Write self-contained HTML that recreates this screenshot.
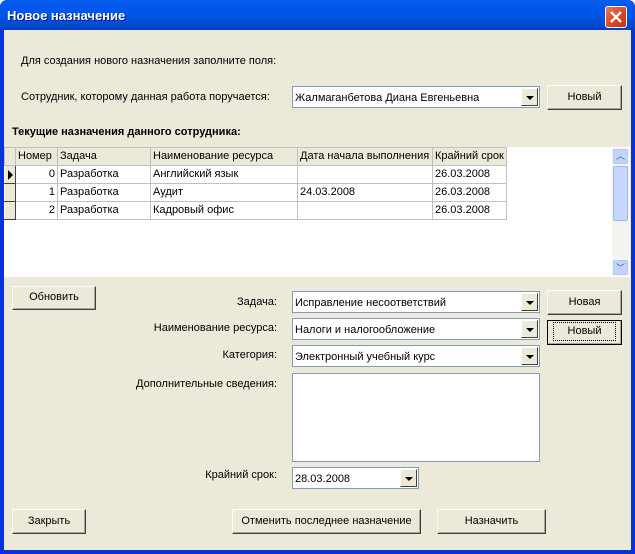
<!DOCTYPE html>
<html><head><meta charset="utf-8"><style>
*{margin:0;padding:0;box-sizing:border-box}
body{width:635px;height:554px;overflow:hidden;background:#fff;font-family:"Liberation Sans",sans-serif;font-size:11px;color:#000;position:relative}
.a{position:absolute}
.win{left:0;top:0;width:635px;height:554px;background:#0831d9;border-radius:7px 7px 0 0}
.title{left:0;top:0;width:635px;height:30px;border-radius:7px 7px 0 0;background:linear-gradient(#0a5fe8,#0058ee 20%,#0054e3 60%,#0047c9 90%,#003dc0)}
.body{left:4px;top:30px;width:627px;height:520px;background:#ece9d8}
.lbl{white-space:nowrap}
.r{text-align:right}
.combo{background:#fff;border:1px solid #7f9db9;height:22px;padding:5px 2px 0;white-space:nowrap;overflow:hidden}
.dd{position:absolute;right:1px;top:1px;width:17px;height:18px;background:#ece9d8;border:1px solid;border-color:#fff #404040 #404040 #fff}
.dd:after{content:"";position:absolute;left:4px;top:7px;border-left:4px solid transparent;border-right:4px solid transparent;border-top:4px solid #000}
.btn{background:#ece9d8;border:1px solid;border-color:#fff #404040 #404040 #fff;box-shadow:inset -1px -1px 0 #aca899;text-align:center;line-height:22px}
table{border-collapse:collapse}
td{border:1px solid #c0c0c0;height:18px;padding:0 2px;white-space:nowrap;line-height:15px}
</style></head><body>
<div class="a win"></div>
<div class="a title"></div>
<div class="a lbl" style="left:7px;top:8px;color:#fff;font-weight:bold;font-size:13px;text-shadow:1px 1px #0a1e7a">Новое назначение</div>
<div class="a" style="left:605px;top:6px;width:22px;height:22px;border:1px solid #fff;border-radius:3px;background:linear-gradient(135deg,#e67a5a,#d8431f 60%,#c23a1a)"><svg width="20" height="20" style="position:absolute;left:0;top:0"><path d="M5 5L15 15M15 5L5 15" stroke="#fff" stroke-width="2.4"/></svg></div>
<div class="a body"></div>

<div class="a lbl" style="left:21px;top:55px">Для создания нового назначения заполните поля:</div>
<div class="a lbl" style="left:21px;top:91px">Сотрудник, которому данная работа поручается:</div>
<div class="a combo" style="left:292px;top:86px;width:248px">Жалмаганбетова Диана Евгеньевна<div class="dd"></div></div>
<div class="a btn" style="left:547px;top:85px;width:75px;height:25px">Новый</div>
<div class="a lbl" style="left:12px;top:126px;font-weight:bold">Текущие назначения данного сотрудника:</div>

<div class="a" style="left:4px;top:147px;width:626px;height:130px;background:#fff"></div>
<table class="a" style="left:4px;top:147px">
<tr style="background:#ece9d8"><td style="width:11px;padding:0;background:#ece9d8"></td><td style="width:42px">Номер</td><td style="width:93px">Задача</td><td style="width:147px">Наименование ресурса</td><td style="width:135px">Дата начала выполнения</td><td style="width:74px">Крайний срок</td></tr>
<tr><td style="padding:0;background:#ece9d8;border-color:#fff #404040 #404040 #fff"><svg width="10" height="14" style="display:block"><path d="M3 2L8 7L3 12Z" fill="#000"/></svg></td><td style="text-align:right">0</td><td>Разработка</td><td>Английский язык</td><td></td><td>26.03.2008</td></tr>
<tr><td style="padding:0;background:#ece9d8;border-color:#fff #404040 #404040 #fff"></td><td style="text-align:right">1</td><td>Разработка</td><td>Аудит</td><td>24.03.2008</td><td>26.03.2008</td></tr>
<tr><td style="padding:0;background:#ece9d8;border-color:#fff #404040 #404040 #fff"></td><td style="text-align:right">2</td><td>Разработка</td><td>Кадровый офис</td><td></td><td>26.03.2008</td></tr>
</table>
<div class="a" style="left:612px;top:148px;width:17px;height:128px;background:#f4f3ee"></div>
<div class="a" style="left:613px;top:149px;width:15px;height:15px;background:#c1d3fb;border:1px solid #b4c8f6;border-radius:2px;color:#4d6185;font-size:9px;text-align:center;line-height:12px">︿</div>
<div class="a" style="left:613px;top:166px;width:15px;height:55px;background:#c6d6fc;border:1px solid #9fb5ee;border-radius:2px"></div>
<div class="a" style="left:613px;top:260px;width:15px;height:15px;background:#c1d3fb;border:1px solid #b4c8f6;border-radius:2px;color:#4d6185;font-size:9px;text-align:center;line-height:14px">﹀</div>

<div class="a btn" style="left:12px;top:286px;width:84px;height:24px;line-height:20px">Обновить</div>
<div class="a lbl r" style="left:100px;width:177px;top:296px">Задача:</div>
<div class="a combo" style="left:292px;top:291px;width:248px">Исправление несоответствий<div class="dd"></div></div>
<div class="a btn" style="left:547px;top:290px;width:75px;height:25px">Новая</div>
<div class="a lbl r" style="left:100px;width:177px;top:322px">Наименование ресурса:</div>
<div class="a combo" style="left:292px;top:318px;width:248px">Налоги и налогообложение<div class="dd"></div></div>
<div class="a btn" style="left:547px;top:320px;width:75px;height:25px;border:1px solid #000;line-height:20px"><span style="border:1px dotted #000;display:inline-block;width:63px;line-height:17px">Новый</span></div>
<div class="a lbl r" style="left:100px;width:177px;top:349px">Категория:</div>
<div class="a combo" style="left:292px;top:345px;width:248px">Электронный учебный курс<div class="dd"></div></div>
<div class="a lbl r" style="left:100px;width:177px;top:378px">Дополнительные сведения:</div>
<div class="a" style="left:292px;top:373px;width:248px;height:89px;background:#fff;border:1px solid #7f9db9"></div>
<div class="a lbl r" style="left:100px;width:177px;top:469px">Крайний срок:</div>
<div class="a combo" style="left:292px;top:467px;width:127px;padding-top:5px">28.03.2008<div class="dd"></div></div>

<div class="a btn" style="left:12px;top:509px;width:74px;height:25px">Закрыть</div>
<div class="a btn" style="left:232px;top:509px;width:189px;height:25px">Отменить последнее назначение</div>
<div class="a btn" style="left:437px;top:509px;width:109px;height:25px">Назначить</div>
</body></html>
